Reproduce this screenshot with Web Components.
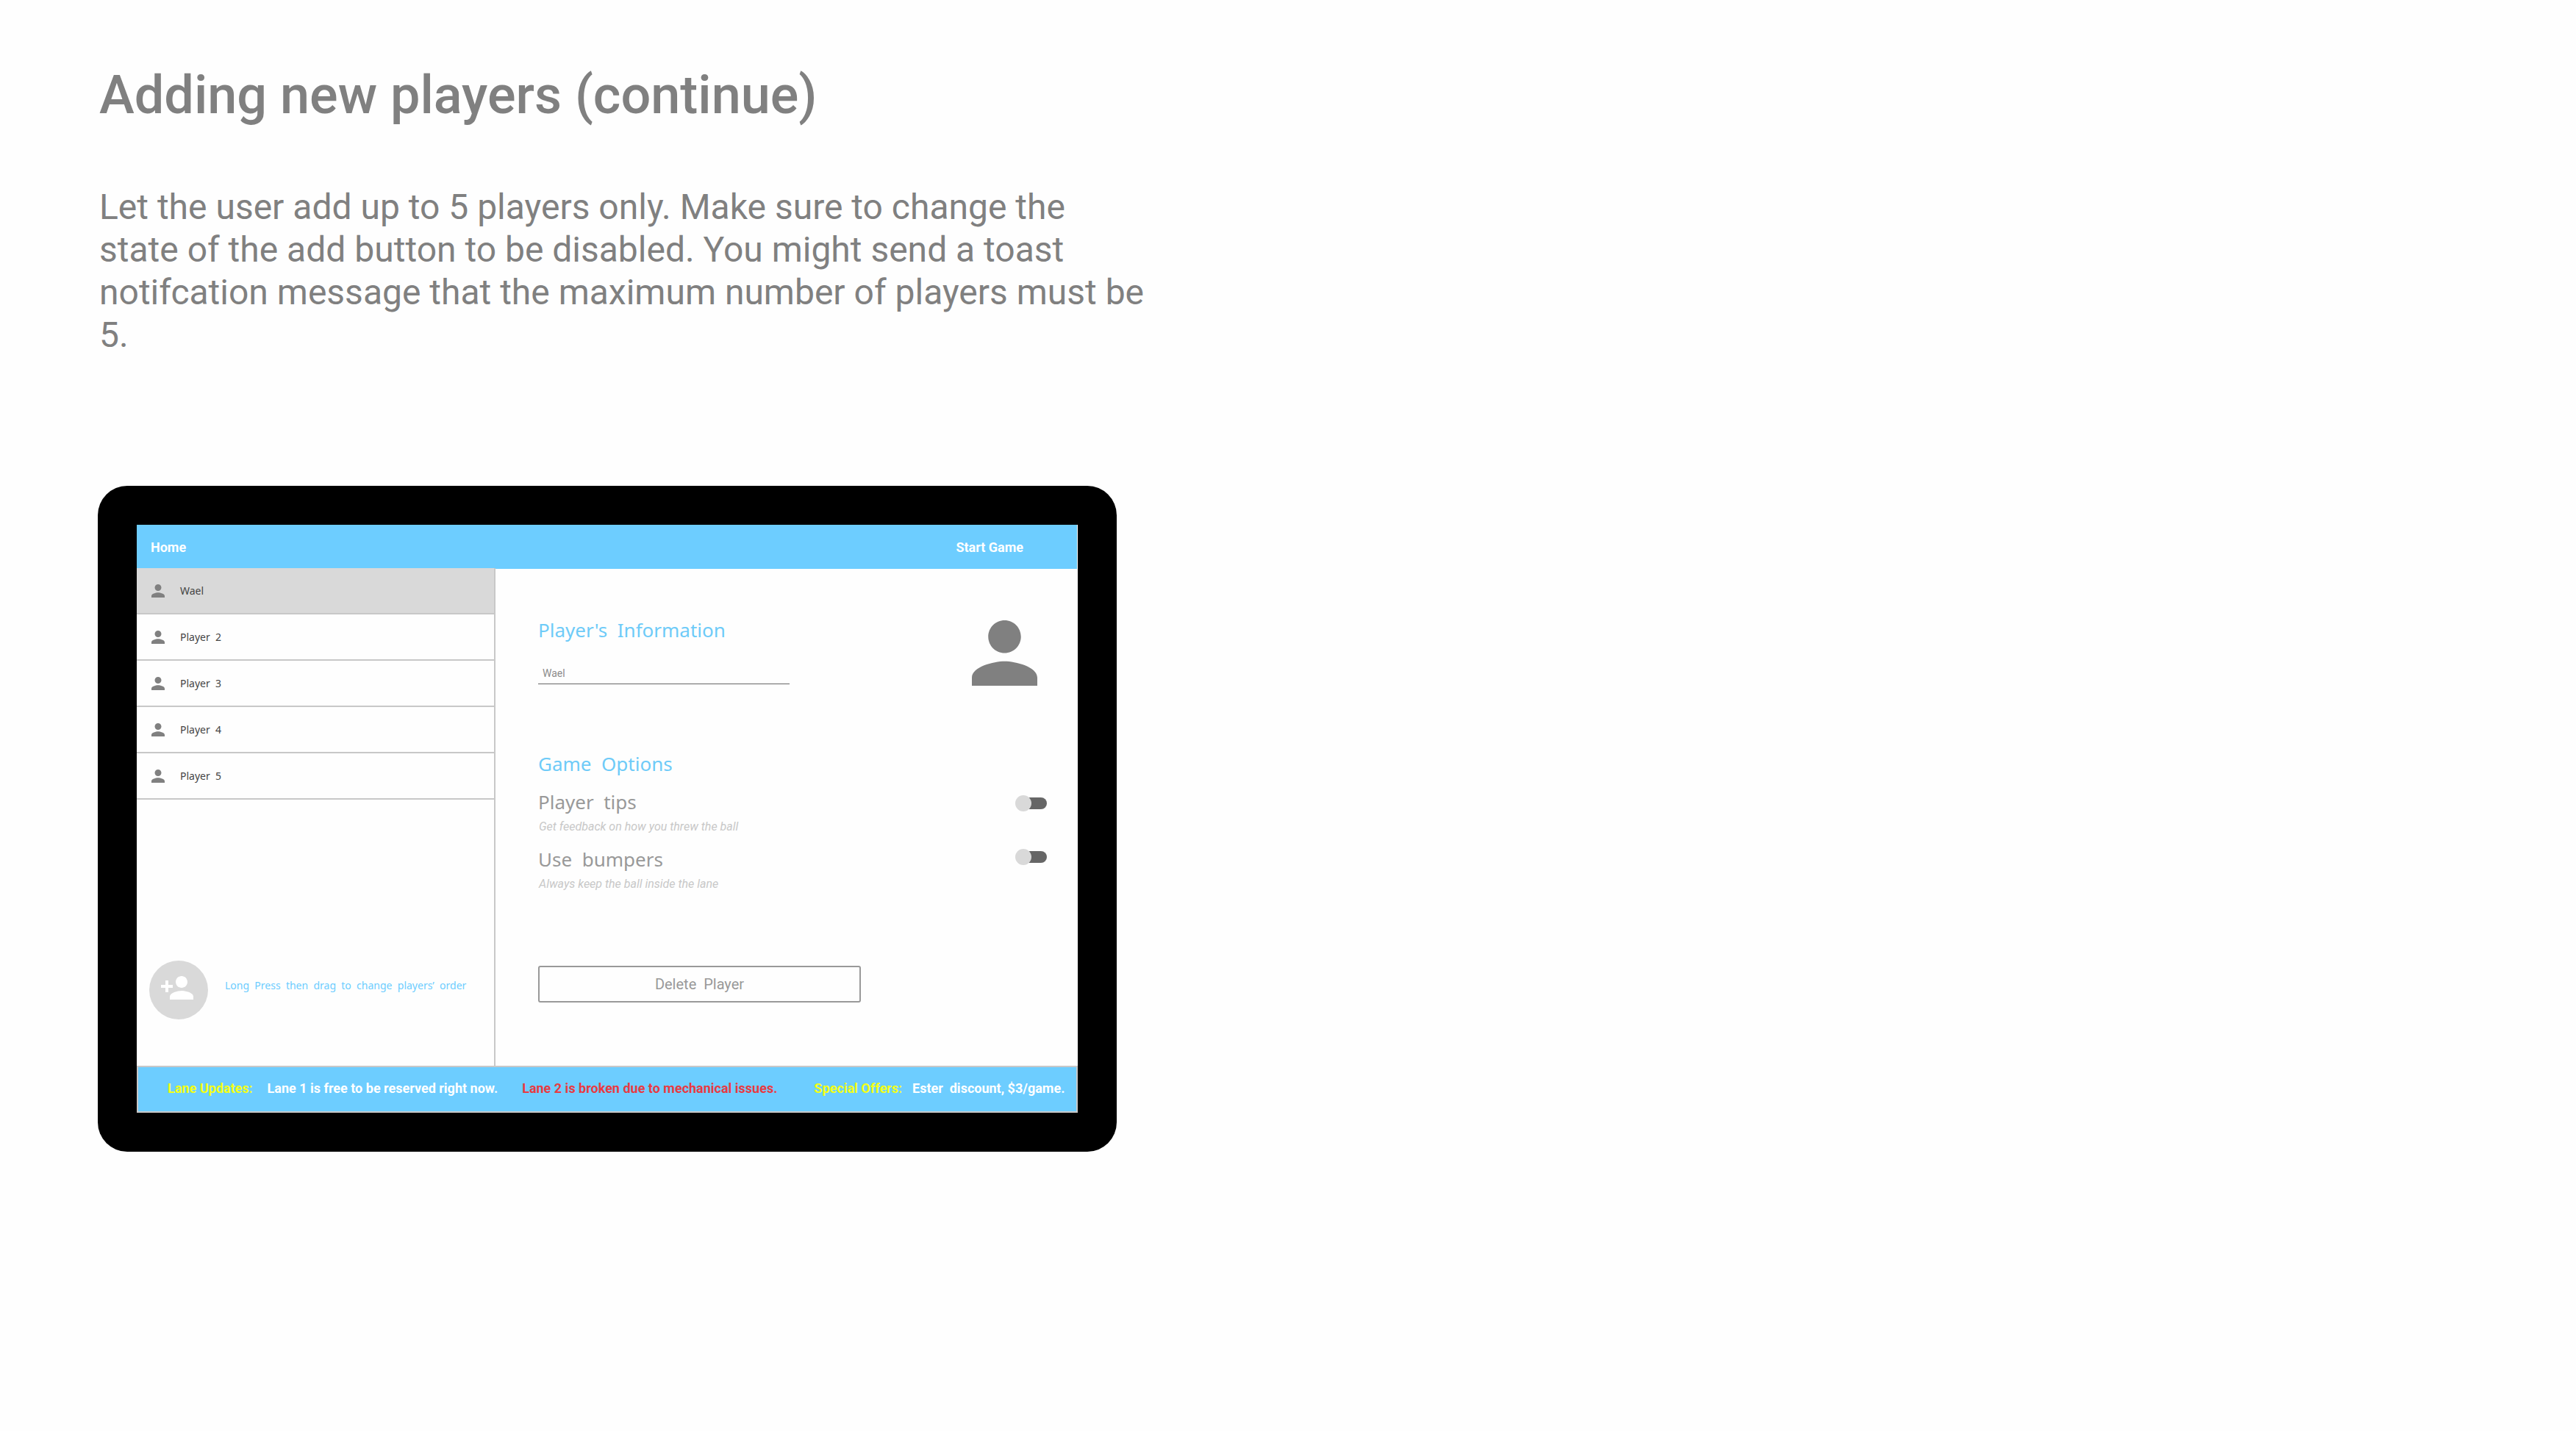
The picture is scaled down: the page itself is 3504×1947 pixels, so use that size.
<!DOCTYPE html>
<html lang="en">
<head>
<meta charset="utf-8">
<meta name="viewport" content="width=device-width, initial-scale=1">
<title>Adding new players (continue)</title>
<style>
  :root {
    --sky: #6dcdff;
    --grey: #808080;
    --line: #c8c8c8;
    --ui: Roboto, "Liberation Sans", sans-serif;
    --body: "Noto Sans", "Open Sans", sans-serif;
  }
  body { margin: 0; background: #fefefe; font-family: var(--ui); color: var(--grey); }
</style>
</head>
<body>
<slide-page>
  <span slot="title">Adding new players (continue)</span>
  <span slot="note">Let the user add up to 5 players only. Make sure to change the state of the add button to be disabled. You might send a toast notifcation message that the maximum number of players must be 5.</span>
  <tablet-frame>
    <app-bar></app-bar>
    <main-area>
      <player-list slot="side">
        <player-row selected>Wael</player-row>
        <player-row>Player&nbsp; 2</player-row>
        <player-row>Player&nbsp; 3</player-row>
        <player-row>Player&nbsp; 4</player-row>
        <player-row>Player&nbsp; 5</player-row>
        <add-player slot="footer">Long&nbsp; Press&nbsp; then&nbsp; drag&nbsp; to&nbsp; change&nbsp; players’&nbsp; order</add-player>
      </player-list>
      <player-details></player-details>
    </main-area>
    <news-ticker></news-ticker>
  </tablet-frame>
</slide-page>

<script>
const PERSON = '<svg viewBox="4 4 16 16" aria-hidden="true"><path fill="currentColor" d="M12 12c2.21 0 4-1.79 4-4s-1.79-4-4-4-4 1.79-4 4 1.79 4 4 4zm0 2c-2.67 0-8 1.34-8 4v2h16v-2c0-2.66-5.33-4-8-4z"/></svg>';

function define(name, html) {
  customElements.define(name, class extends HTMLElement {
    constructor() {
      super();
      this.attachShadow({ mode: 'open' }).innerHTML = html;
    }
  });
}

define('slide-page', `
  <style>
    :host { display: block; padding: 88px 133px; }
    header { padding-left: 2px; }
    h1 { margin: 0 0 81px; font-size: 72px; line-height: 84px; font-weight: 500; }
    p { margin: 0 0 176px; max-width: 1424px; font-size: 48px; line-height: 58px; }
  </style>
  <header>
    <h1><slot name="title"></slot></h1>
    <p><slot name="note"></slot></p>
  </header>
  <slot></slot>`);

define('tablet-frame', `
  <style>
    :host { display: block; box-sizing: border-box; max-width: 1386px; padding: 53px; border-radius: 40px; background: #000; }
    .screen { display: flex; flex-direction: column; background: #fefefe; }
  </style>
  <div class="screen"><slot></slot></div>`);

define('app-bar', `
  <style>
    :host { display: block; margin-right: 1px; background: var(--sky); }
    nav { display: flex; align-items: center; justify-content: space-between; padding: 20px 73px 18px 19px; }
    a, button { font: 700 18px/22px var(--ui); color: #fff; text-decoration: none; }
    button { margin: 0; padding: 0; border: 0; background: none; }
  </style>
  <nav><a href="#home">Home</a><button type="button">Start Game</button></nav>`);

define('main-area', `
  <style>
    :host { display: flex; }
    ::slotted(player-list) { flex: 0 0 486px; margin-top: -1px; }
    ::slotted(player-details) { flex: 1; }
  </style>
  <slot name="side"></slot><slot></slot>`);

define('player-list', `
  <style>
    :host { display: flex; flex-direction: column; justify-content: space-between; border-right: 2px solid var(--line); }
    .rows { display: flex; flex-direction: column; }
  </style>
  <div class="rows"><slot></slot></div>
  <slot name="footer"></slot>`);

define('player-row', `
  <style>
    :host { display: block; border-bottom: 2px solid var(--line); }
    button { display: flex; align-items: center; gap: 21px; width: 100%; height: 61px; margin: 0; padding: 0 20px; border: 0; background: none; font: 14px/20px var(--body); color: #444; text-align: left; }
    :host([selected]) button { background: #d9d9d9; }
    svg { width: 18px; height: 18px; color: var(--grey); }
  </style>
  <button type="button">${PERSON}<span><slot></slot></span></button>`);

define('add-player', `
  <style>
    :host { display: flex; align-items: flex-start; gap: 23px; padding: 0 17px 63px; }
    button { display: block; width: 80px; height: 80px; padding: 0; border: 0; border-radius: 50%; background: #d9d9d9; color: #fff; }
    svg { display: block; width: 80px; height: 80px; }
    span { font: 14px/68px var(--body); color: var(--sky); }
  </style>
  <button type="button" disabled aria-label="Add player">
    <svg viewBox="-7 -6.5 40 40" aria-hidden="true"><path fill="#fff" d="M15 12c2.21 0 4-1.79 4-4s-1.79-4-4-4-4 1.79-4 4 1.79 4 4 4zm-9-2V7H4v3H1v2h3v3h2v-3h3v-2H6zm9 4c-2.67 0-8 1.34-8 4v2h16v-2c0-2.66-5.33-4-8-4z"/></svg>
  </button>
  <span><slot></slot></span>`);

define('player-details', `
  <style>
    :host { display: block; padding: 65px 42px 86px 58px; font: 26px/36px var(--body); }
    h2 { margin: 0; font: inherit; color: #6ecbf8; }
    .info, .options { display: flex; justify-content: space-between; align-items: flex-start; }
    .info { margin-bottom: 88px; }
    input[type=text] { display: block; box-sizing: border-box; width: 342px; height: 28px; margin: 28px 0 0; padding: 0 6px 2px; border: 0; border-bottom: 1px solid #666; border-radius: 0; background: none; font: 14px/20px var(--ui); color: #8c8c8c; }
    .avatar { width: 89px; height: 89px; margin: 5px 13px 0 0; color: var(--grey); }
    .avatar svg { display: block; }
    .labels { display: flex; flex-direction: column; gap: 16px; color: #999; }
    label { display: block; }
    p { margin: 6px 0 0; padding-left: 1px; font: italic 16px/20px var(--ui); color: #c8c8c8; }
    .switches { display: flex; flex-direction: column; gap: 51px; padding-top: 61px; }
    .switches input { appearance: none; display: grid; align-items: center; width: 43px; height: 22px; margin: 0; }
    .switches input::before { content: ""; grid-area: 1 / 1; justify-self: end; width: 32px; height: 16px; border-radius: 8px; background: #666; }
    .switches input::after { content: ""; grid-area: 1 / 1; justify-self: start; width: 22px; height: 22px; border-radius: 50%; background: #d9d9d9; }
    .switches input:checked::after { justify-self: end; }
    .delete { display: block; box-sizing: border-box; width: 439px; height: 50px; margin-top: 101px; padding: 0; border: 2px solid #999; border-radius: 3px; background: none; font: 20px/24px var(--ui); color: #999; }
  </style>
  <section class="info">
    <div>
      <h2 id="info">Player's&nbsp; Information</h2>
      <input type="text" value="Wael" aria-labelledby="info">
    </div>
    <div class="avatar">${PERSON}</div>
  </section>
  <section class="options">
    <div class="labels">
      <h2>Game&nbsp; Options</h2>
      <div><label for="tips">Player&nbsp; tips</label><p>Get feedback on how you threw the ball</p></div>
      <div><label for="bumpers">Use&nbsp; bumpers</label><p>Always keep the ball inside the lane</p></div>
    </div>
    <div class="switches">
      <input type="checkbox" role="switch" id="tips">
      <input type="checkbox" role="switch" id="bumpers">
    </div>
  </section>
  <button class="delete" type="button">Delete&nbsp; Player</button>`);

define('news-ticker', `
  <style>
    :host { display: flex; align-items: center; padding: 18px 16px 20px 40px; border: 2px solid var(--line); background: var(--sky); font: 700 18px/22px var(--ui); color: #fff; white-space: nowrap; }
    .tag { color: #f4ff14; }
    .lanes, .offers { display: flex; }
    .lanes { gap: 20px; margin-right: 33px; }
    .alert { color: #e83a42; margin-right: 50px; }
    .offers { gap: 14px; }
  </style>
  <div class="lanes"><span class="tag">Lane Updates:</span><span>Lane 1 is free to be reserved right now.</span></div>
  <div class="alert">Lane 2 is broken due to mechanical issues.</div>
  <div class="offers"><span class="tag">Special Offers:</span><span>Ester&nbsp; discount, $3/game.</span></div>`);
</script>
</body>
</html>
